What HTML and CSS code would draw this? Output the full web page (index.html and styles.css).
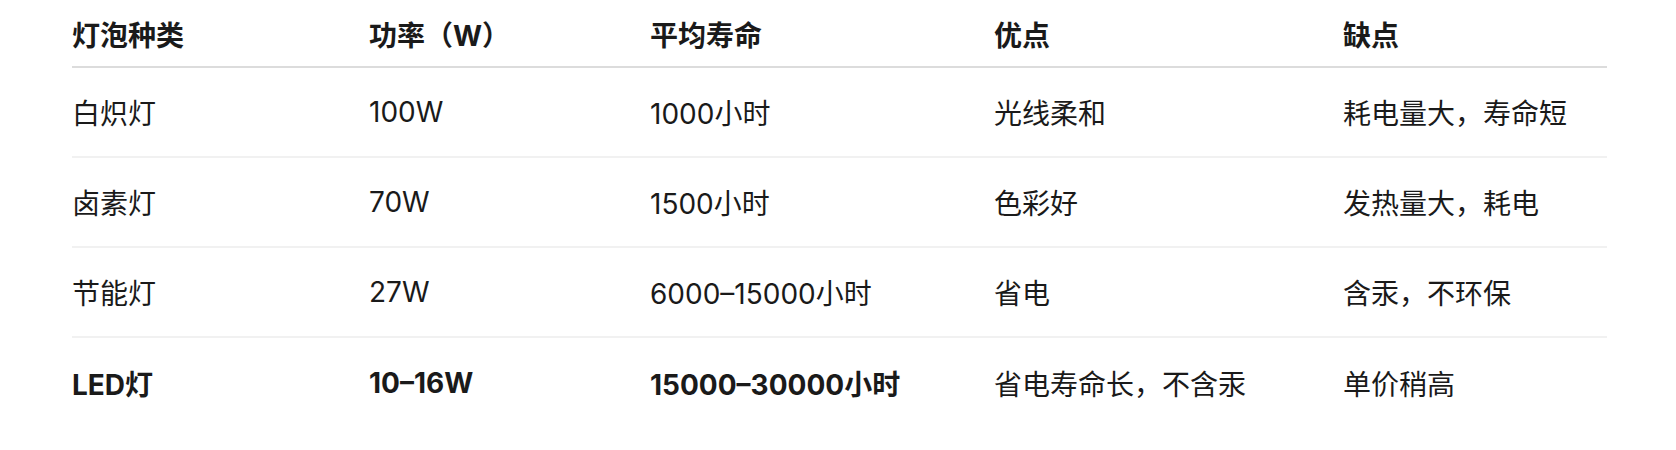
FILE: index.html
```html
<!DOCTYPE html>
<html lang="zh-CN">
<head>
<meta charset="utf-8">
<link rel="stylesheet" href="styles.css">
</head>
<body>
<table class="bulbs">
  <colgroup>
    <col class="c1"><col class="c2"><col class="c3"><col class="c4"><col class="c5">
  </colgroup>
  <thead>
    <tr><th>灯泡种类</th><th>功率（W）</th><th>平均寿命</th><th>优点</th><th>缺点</th></tr>
  </thead>
  <tbody>
    <tr><td>白炽灯</td><td>100W</td><td>1000小时</td><td>光线柔和</td><td>耗电量大，寿命短</td></tr>
    <tr><td>卤素灯</td><td>70W</td><td>1500小时</td><td>色彩好</td><td>发热量大，耗电</td></tr>
    <tr><td>节能灯</td><td>27W</td><td>6000–15000小时</td><td>省电</td><td>含汞，不环保</td></tr>
    <tr class="last"><td class="strong">LED灯</td><td class="strong">10–16W</td><td class="strong">15000–30000小时</td><td>省电寿命长，不含汞</td><td>单价稍高</td></tr>
  </tbody>
</table>
</body>
</html>
```
FILE: styles.css
```css
html, body {
  margin: 0;
  padding: 0;
  background: #ffffff;
}
body {
  font-family: Inter, "Noto Sans CJK SC", sans-serif;
  color: #1a1a1a;
  font-size: 28px;
}
.bulbs {
  margin-left: 72px;
  width: 1535px;
  border-collapse: collapse;
  table-layout: fixed;
}
.c1 { width: 297px; }
.c2 { width: 281px; }
.c3 { width: 344px; }
.c4 { width: 349px; }
.c5 { width: 264px; }
.bulbs th {
  text-align: left;
  font-weight: 700;
  height: 67px;
  padding: 1px 0 0 0;
  box-sizing: border-box;
  vertical-align: middle;
  border-bottom: 2px solid #dcdcdc;
  white-space: nowrap;
}
.bulbs td {
  text-align: left;
  font-weight: 400;
  height: 90px;
  padding: 0;
  box-sizing: border-box;
  vertical-align: middle;
  border-bottom: 2px solid #f1f1f1;
  white-space: nowrap;
}
.bulbs tr.last td {
  border-bottom: none;
}
.bulbs td.strong {
  font-weight: 700;
}
```
